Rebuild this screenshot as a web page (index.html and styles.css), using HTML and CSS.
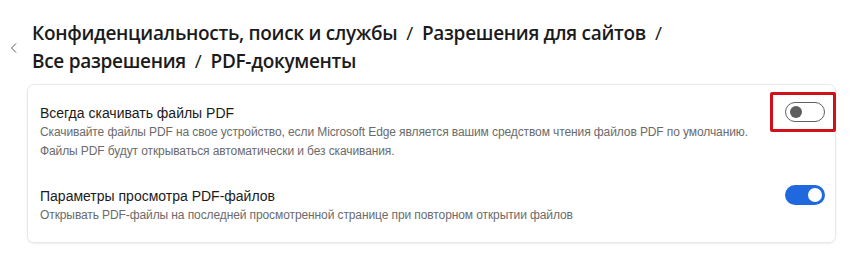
FILE: index.html
```html
<!DOCTYPE html>
<html lang="ru">
<head>
<meta charset="utf-8">
<link rel="stylesheet" href="styles.css">
</head>
<body>
<div class="page">
  <div class="header">
    <button class="back" aria-label="Назад">
      <svg width="8" height="10" viewBox="0 0 8 10"><path d="M6 0.5 L1.5 5 L6 9.5" fill="none" stroke="#555" stroke-width="1"/></svg>
    </button>
    <h1 class="crumbs">Конфиденциальность, поиск и службы<span class="sep">/</span>Разрешения для сайтов<span class="sep">/</span><br>Все разрешения<span class="sep">/</span>PDF-документы</h1>
  </div>
  <div class="card">
    <div class="row row-first">
      <div class="text">
        <div class="label">Всегда скачивать файлы PDF</div>
        <div class="desc">Скачивайте файлы PDF на свое устройство, если Microsoft Edge является вашим средством чтения файлов PDF по умолчанию.<br>Файлы PDF будут открываться автоматически и без скачивания.</div>
      </div>
      <div class="toggle-wrap">
        <span class="toggle off"><span class="knob"></span></span>
        <span class="highlight"></span>
      </div>
    </div>
    <div class="row row-second">
      <div class="text">
        <div class="label">Параметры просмотра PDF-файлов</div>
        <div class="desc">Открывать PDF-файлы на последней просмотренной странице при повторном открытии файлов</div>
      </div>
      <div class="toggle-wrap">
        <span class="toggle on"><span class="knob"></span></span>
      </div>
    </div>
  </div>
</div>
</body>
</html>
```
FILE: styles.css
```css
html, body {
  margin: 0;
  padding: 0;
  background: #ffffff;
}
body {
  font-family: "Open Sans", "Noto Sans", sans-serif;
  color: #1b1b1b;
}
.page {
  width: 862px;
  height: 257px;
  box-sizing: border-box;
  padding: 19px 26px 0 10px;
}
.header {
  display: flex;
  align-items: flex-start;
}
.back {
  border: 0;
  background: none;
  padding: 0;
  margin: 24px 14px 0 0;
  width: 8px;
  height: 10px;
  display: flex;
}
.crumbs {
  margin: 0;
  font-size: 19px;
  font-weight: 600;
  line-height: 28px;
  color: #1b1b1b;
  letter-spacing: -0.3px;
}
.sep {
  margin: 0 9px;
  font-weight: 400;
}
.card {
  margin: 9px 0 0 17px;
  border: 1px solid #e9e9e9;
  border-radius: 7px;
  box-shadow: 0 1px 2px rgba(0,0,0,0.08);
  padding: 18px 10px 19px 12px;
  height: 159px;
  box-sizing: border-box;
}
.row {
  display: flex;
  align-items: flex-start;
}
.row-second {
  margin-top: 25px;
}
.text {
  flex: 1;
}
.label {
  font-family: "Liberation Sans", sans-serif;
  font-size: 14px;
  line-height: 20px;
  color: #1b1b1b;
}
.desc {
  font-family: "Liberation Sans", sans-serif;
  font-size: 12px;
  line-height: 19px;
  color: #6b6b6b;
  letter-spacing: -0.1px;
}
.toggle-wrap {
  position: relative;
  margin-top: -1px;
}
.toggle {
  display: flex;
  align-items: center;
  width: 40px;
  height: 20px;
  box-sizing: border-box;
  border-radius: 10px;
  padding: 0 4px;
}
.toggle.off {
  border: 1px solid #616161;
  background: #fff;
}
.toggle.off .knob {
  width: 12px;
  height: 12px;
  border-radius: 50%;
  background: #5f5f5f;
}
.toggle.on {
  background: #1f68dd;
  justify-content: flex-end;
  padding: 0 3px;
}
.toggle.on .knob {
  width: 14px;
  height: 14px;
  border-radius: 50%;
  background: #fff;
}
.highlight {
  position: absolute;
  left: -15px;
  right: -11px;
  top: -10px;
  bottom: -10px;
  border: 3px solid #d0111a;
  border-radius: 2px;
}
```
